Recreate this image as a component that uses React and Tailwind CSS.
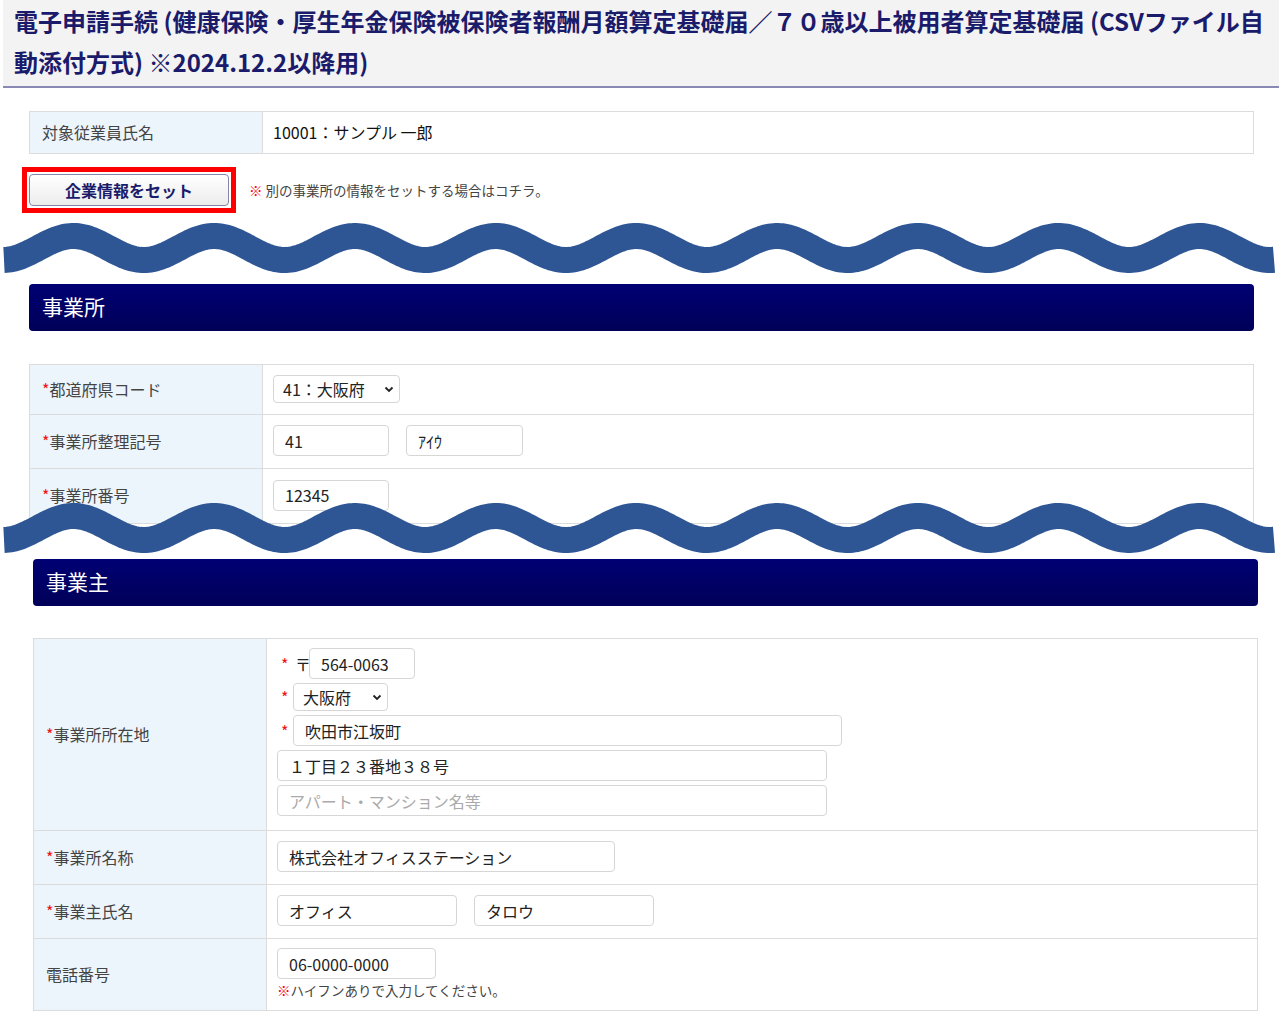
import React from "react";

const inputCls =
  "h-[31px] rounded-[4px] border border-[#d6d6d6] bg-white px-[11px] text-[16px] text-[#222] outline-none placeholder:text-[#aaa]";

function wavePath(mid) {
  const period = 140.75;
  let d = "";
  for (let x = 4; x <= 1274; x += 2) {
    const y = mid + 12 * Math.cos((2 * Math.PI * (x - 3)) / period);
    d += (x === 4 ? "M" : "L") + x + " " + y.toFixed(2) + " ";
  }
  return d;
}

function Star() {
  return <span className="text-[#ee1111]">*</span>;
}

function Select({ value, width }) {
  return (
    <div className="relative" style={{ width }}>
      <select
        defaultValue={value}
        className="h-[28px] w-full appearance-none rounded-[4px] border border-[#d6d6d6] bg-white pl-[9px] pr-[20px] text-[16px] text-[#222] outline-none"
      >
        <option>{value}</option>
      </select>
      <svg
        className="pointer-events-none absolute right-[6px] top-[11px]"
        width="10"
        height="7"
        viewBox="0 0 10 7"
      >
        <polyline
          points="1.5,1.5 5,5 8.5,1.5"
          fill="none"
          stroke="#222"
          strokeWidth="1.8"
        />
      </svg>
    </div>
  );
}

function Row({ label, required, height, children, top }) {
  return (
    <div
      className="flex border-t border-[#dcdcdc] first:border-t-0"
      style={{ height }}
    >
      <div className="flex w-[233px] shrink-0 items-center border-r border-[#dcdcdc] bg-[#edf5fc] pb-[2px] pl-[12px] text-[16px] text-[#444]">
        {required && <Star />}
        {label}
      </div>
      <div
        className={
          top
            ? "flex flex-1 flex-col pl-[10px] pt-[9px]"
            : "flex flex-1 items-center pb-[2px] pl-[10px]"
        }
      >
        {children}
      </div>
    </div>
  );
}

function SectionBar({ title }) {
  return (
    <div className="flex h-[47px] items-center rounded-[4px] bg-gradient-to-b from-[#000074] to-[#000058] pb-[2px] pl-[13px] text-[21px] text-white">
      {title}
    </div>
  );
}

export default function App() {
  return (
    <div className="relative h-[1024px] w-[1286px] overflow-hidden bg-white font-['Noto_Sans_CJK_JP','Noto_Sans',sans-serif]">
      {/* title */}
      <div className="ml-[3px] w-[1276px] border-b-2 border-[#8a89b6] bg-[#f3f3f3] pb-[4px] pl-[11px] text-[24px] font-bold leading-[41px] whitespace-nowrap text-[#1b1b6b]">
        電子申請手続 (健康保険・厚生年金保険被保険者報酬月額算定基礎届／７０歳以上被用者算定基礎届 (CSVファイル自
        <br />
        動添付方式) ※2024.12.2以降用)
      </div>

      {/* upper screen */}
      <div className="ml-[29px] w-[1225px]">
        <div className="mt-[23px] border border-[#dcdcdc]">
          <Row label="対象従業員氏名" height={41}>
            <span className="text-[16px] text-[#111]">10001：サンプル 一郎</span>
          </Row>
        </div>

        <div className="mt-[13px] flex items-center">
          <div className="-ml-[7px] border-[5px] border-[#ff0000] p-[2px]">
            <button className="h-[32px] w-[200px] rounded-[4px] border border-[#8585a8] bg-gradient-to-b from-white to-[#ececec] text-[16px] font-bold text-[#1b1b6b]">
              企業情報をセット
            </button>
          </div>
          <p className="ml-[13px] text-[13.5px] text-[#444]">
            <span className="text-[#ff0000]">※</span> 別の事業所の情報をセットする場合はコチラ。
          </p>
        </div>

        <div className="mt-[71px]">
          <SectionBar title="事業所" />
        </div>

        <div className="mt-[33px] border border-[#dcdcdc]">
          <Row label="都道府県コード" required height={49}>
            <Select value="41：大阪府" width={127} />
          </Row>
          <Row label="事業所整理記号" required height={54}>
            <div className="flex gap-[17px]">
              <input className={inputCls + " w-[116px]"} defaultValue="41" />
              <input className={inputCls + " w-[117px] text-[14px]"} defaultValue="ｱｲｳ" />
            </div>
          </Row>
          <Row label="事業所番号" required height={55}>
            <input className={inputCls + " w-[116px]"} defaultValue="12345" />
          </Row>
        </div>
      </div>

      {/* lower screen */}
      <div className="ml-[33px] mt-[35px] w-[1225px]">
        <SectionBar title="事業主" />

        <div className="mt-[32px] border border-[#dcdcdc]">
          <Row label="事業所所在地" required height={191} top>
            <div className="flex flex-col gap-[4px] text-[16px] text-[#222]">
              <div className="flex items-center">
                <span className="ml-[4px] w-[14px]">
                  <Star />
                </span>
                <span className="w-[14px]">〒</span>
                <input className={inputCls + " w-[106px]"} defaultValue="564-0063" />
              </div>
              <div className="flex items-center">
                <span className="ml-[4px] w-[12px]">
                  <Star />
                </span>
                <Select value="大阪府" width={95} />
              </div>
              <div className="flex items-center">
                <span className="ml-[4px] w-[12px]">
                  <Star />
                </span>
                <input className={inputCls + " w-[549px]"} defaultValue="吹田市江坂町" />
              </div>
              <input className={inputCls + " w-[550px]"} defaultValue="１丁目２３番地３８号" />
              <input className={inputCls + " w-[550px]"} placeholder="アパート・マンション名等" />
            </div>
          </Row>
          <Row label="事業所名称" required height={54}>
            <input className={inputCls + " w-[338px]"} defaultValue="株式会社オフィスステーション" />
          </Row>
          <Row label="事業主氏名" required height={54}>
            <div className="flex gap-[17px]">
              <input className={inputCls + " w-[180px]"} defaultValue="オフィス" />
              <input className={inputCls + " w-[180px]"} defaultValue="タロウ" />
            </div>
          </Row>
          <Row label="電話番号" height={72} top>
            <input className={inputCls + " w-[159px]"} defaultValue="06-0000-0000" />
            <p className="mt-[1px] text-[13.5px] text-[#444]">
              <span className="text-[#ff0000]">※</span>ハイフンありで入力してください。
            </p>
          </Row>
        </div>
      </div>

      {/* wavy cut marks laid over the page */}
      <svg
        className="pointer-events-none absolute left-0 top-0"
        width="1286"
        height="1024"
        viewBox="0 0 1286 1024"
      >
        <path d={wavePath(248)} fill="none" stroke="#2e5594" strokeWidth="26" />
        <path d={wavePath(528)} fill="none" stroke="#2e5594" strokeWidth="26" />
      </svg>
    </div>
  );
}
